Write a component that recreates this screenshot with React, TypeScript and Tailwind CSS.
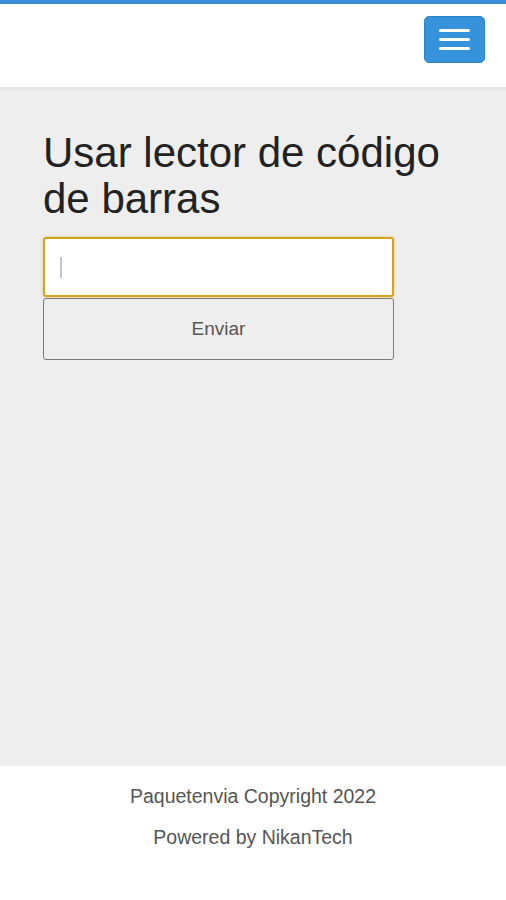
import React from 'react';

const App: React.FC = () => {
  return (
    <div className="min-h-[900px] flex flex-col bg-white font-['Liberation_Sans',Arial,sans-serif]">
      {/* Navbar */}
      <header className="border-t-4 border-[#3a8fd6] bg-white border-b-[3px] border-b-[#e6e6e6]">
        <div className="h-[83px] flex items-start justify-end pr-[21px] pt-[12px]">
          <button
            type="button"
            className="w-[61px] h-[47px] rounded-[5px] bg-[#3592db] border border-[#2f84c6] flex flex-col items-center justify-center gap-[6px]"
          >
            <span className="block w-[31px] h-[3px] rounded-full bg-white" />
            <span className="block w-[31px] h-[3px] rounded-full bg-white" />
            <span className="block w-[31px] h-[3px] rounded-full bg-white" />
          </button>
        </div>
      </header>

      {/* Content */}
      <main className="h-[676px] bg-[#eeeeee] px-[43px] pt-[40px]">
        <h1 className="text-[42px] leading-[46px] text-[#222] font-normal mb-[15px]">
          Usar lector de código de barras
        </h1>
        <form className="w-[351px]">
          <div className="relative">
            <input
              type="text"
              className="w-full h-[60px] rounded-[3px] border-2 border-[#d6a31f] bg-white px-4 text-[19px] outline-none shadow-[0_0_3px_rgba(214,163,31,0.5)]"
            />
            <span className="absolute left-[17px] top-[20px] w-[2px] h-[21px] bg-[#c4c4c4]" />
          </div>
          <button
            type="button"
            className="mt-px w-full h-[62px] rounded-[3px] border border-[#7a7a7a] bg-[#eeeeee] text-[19px] text-[#555]"
          >
            Enviar
          </button>
        </form>
      </main>

      {/* Footer */}
      <footer className="flex-1 bg-white pt-[19px] text-center text-[19.5px] text-[#555]">
        <p className="leading-[23px]">Paquetenvia Copyright 2022</p>
        <p className="mt-[18px] leading-[23px]">Powered by NikanTech</p>
      </footer>
    </div>
  );
};

export default App;
